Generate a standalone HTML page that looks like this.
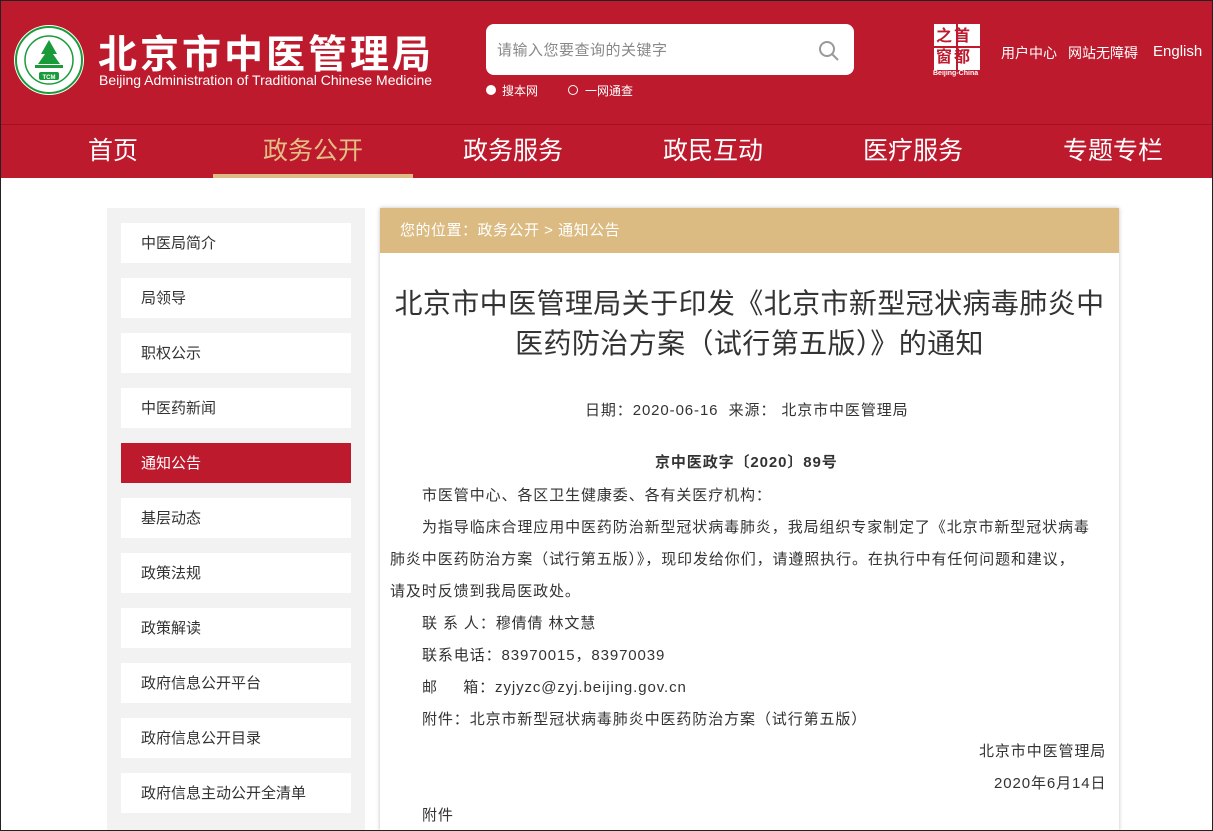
<!DOCTYPE html>
<html><head><meta charset="utf-8"><style>
*{margin:0;padding:0;box-sizing:border-box}
html,body{width:1213px;height:831px;overflow:hidden}
body{position:relative;background:#fff;font-family:"Liberation Sans","Noto Sans CJK SC",sans-serif;color:#333}
.frame{position:absolute;left:0;top:0;width:1213px;height:831px;border:1px solid #222;z-index:10;pointer-events:none}
.hd{position:absolute;left:0;top:0;width:1213px;height:124px;background:#bd1a2d}
.nav{position:absolute;left:0;top:124px;width:1213px;height:54px;background:#bd1a2d;border-top:1px solid #a3111f}
.nav div{position:absolute;top:0;width:200px;height:53px;text-align:center;line-height:52px;font-size:25px;color:#fff}
.nav .on{color:#e3bf86;border-bottom:4px solid #dcbc84}
.abs{position:absolute;white-space:nowrap}
.side{position:absolute;left:107px;top:208px;width:258px;height:623px;background:#f2f2f2}
.side div{position:absolute;left:14px;width:230px;height:40px;background:#fff;font-size:15px;line-height:42px;padding-left:20px;color:#333}
.side .act{background:#bd1a2d;color:#fff}
.main{position:absolute;left:380px;top:208px;width:739px;height:623px;background:#fff;box-shadow:0 0 4px rgba(0,0,0,.25)}
.bc{height:45px;background:#dbbb82;color:#fff;font-size:15px;line-height:46px;padding-left:20px;letter-spacing:.5px}
.t{font-size:15px;position:absolute;white-space:nowrap;color:#333;letter-spacing:.9px}
</style></head><body>
<div class="frame"></div>
<div class="hd">
 <svg class="abs" style="left:13px;top:24px" width="72" height="72" viewBox="0 0 72 72">
  <circle cx="36" cy="36" r="35" fill="#fff"/><circle cx="36" cy="36" r="33" fill="none" stroke="#1a9b3a" stroke-width="2"/>
  <circle cx="36" cy="36" r="24" fill="#fff" stroke="#1a9b3a" stroke-width="1.5"/>
  <path d="M36 16 L44 30 L40 30 L47 40 L25 40 L32 30 L28 30Z" fill="#1a9b3a"/>
  <rect x="22" y="41" width="28" height="3" fill="#1a9b3a"/>
  <rect x="26" y="48" width="20" height="8" rx="2" fill="#1a9b3a"/>
  <text x="36" y="55" font-size="6" fill="#fff" text-anchor="middle" font-weight="bold" font-family="Liberation Sans">TCM</text>
 </svg>
 <div class="abs" style="left:98px;top:24px;font-size:39px;font-weight:bold;color:#fff;letter-spacing:3px">北京市中医管理局</div>
 <div class="abs" style="left:99px;top:72px;font-size:14px;color:#fff">Beijing Administration of Traditional Chinese Medicine</div>
 <div class="abs" style="left:486px;top:24px;width:368px;height:51px;background:#fff;border-radius:8px"></div>
 <div class="abs" style="left:497px;top:39px;font-size:15px;color:#888;letter-spacing:.5px">请输入您要查询的关键字</div>
 <svg class="abs" style="left:818px;top:40px" width="22" height="22" viewBox="0 0 22 22"><circle cx="9" cy="9" r="7" fill="none" stroke="#999" stroke-width="2"/><path d="M14 14l6 6" stroke="#999" stroke-width="2"/></svg>
 <div class="abs" style="left:486px;top:85px;width:10px;height:10px;border-radius:50%;background:#fff"></div>
 <div class="abs" style="left:502px;top:82px;font-size:12px;color:#fff">搜本网</div>
 <div class="abs" style="left:568px;top:85px;width:10px;height:10px;border-radius:50%;border:1px solid #fff"></div>
 <div class="abs" style="left:585px;top:82px;font-size:12px;color:#fff">一网通查</div>
 <div class="abs" style="left:934px;top:24px;width:46px;height:46px;background:#fff"></div>
 <div class="abs" style="left:936px;top:26px;width:42px;font-size:16px;line-height:21px;color:#bd1a2d;font-weight:bold;white-space:normal;letter-spacing:2px">之首<br>窗都</div>
 <div class="abs" style="left:956px;top:24px;width:2px;height:46px;background:#bd1a2d"></div>
 <div class="abs" style="left:934px;top:46px;width:46px;height:2px;background:#bd1a2d"></div>
 <div class="abs" style="left:933px;top:70px;font-size:7px;color:#fff;font-weight:bold">Beijing-China</div>
 <div class="abs" style="left:1001px;top:43px;font-size:14px;color:#fff">用户中心</div>
 <div class="abs" style="left:1068px;top:43px;font-size:14px;color:#fff">网站无障碍</div>
 <div class="abs" style="left:1153px;top:43px;font-size:15px;color:#fff">English</div>
</div>
<div class="nav">
 <div style="left:13px">首页</div><div class="on" style="left:213px">政务公开</div><div style="left:413px">政务服务</div><div style="left:613px">政民互动</div><div style="left:813px">医疗服务</div><div style="left:1013px">专题专栏</div>
</div>
<div class="side">
 <div style="top:15px">中医局简介</div><div style="top:70px">局领导</div><div style="top:125px">职权公示</div><div style="top:180px">中医药新闻</div><div class="act" style="top:235px">通知公告</div><div style="top:290px">基层动态</div><div style="top:345px">政策法规</div><div style="top:400px">政策解读</div><div style="top:455px">政府信息公开平台</div><div style="top:510px">政府信息公开目录</div><div style="top:565px">政府信息主动公开全清单</div>
</div>
<div class="main"><div class="bc">您的位置：政务公开 &gt; 通知公告</div></div>
<div class="abs" style="left:380px;top:284px;width:739px;text-align:center;font-size:28px;line-height:40px;color:#333;letter-spacing:0.4px">北京市中医管理局关于印发《北京市新型冠状病毒肺炎中<br>医药防治方案（试行第五版）》的通知</div>
<div class="t" style="left:585px;top:399px">日期：2020-06-16&nbsp; 来源： 北京市中医管理局</div>
<div class="t" style="left:655px;top:451px;font-weight:bold">京中医政字〔2020〕89号</div>
<div class="t" style="left:422px;top:484px">市医管中心、各区卫生健康委、各有关医疗机构：</div>
<div class="t" style="left:422px;top:516px">为指导临床合理应用中医药防治新型冠状病毒肺炎，我局组织专家制定了《北京市新型冠状病毒</div>
<div class="t" style="left:390px;top:548px">肺炎中医药防治方案（试行第五版）》，现印发给你们，请遵照执行。在执行中有任何问题和建议，</div>
<div class="t" style="left:390px;top:580px">请及时反馈到我局医政处。</div>
<div class="t" style="left:422px;top:612px">联 系 人：穆倩倩 林文慧</div>
<div class="t" style="left:422px;top:644px">联系电话：83970015，83970039</div>
<div class="t" style="left:422px;top:676px">邮&nbsp;&nbsp;&nbsp;&nbsp; 箱：zyjyzc@zyj.beijing.gov.cn</div>
<div class="t" style="left:422px;top:708px">附件：北京市新型冠状病毒肺炎中医药防治方案（试行第五版）</div>
<div class="t" style="left:979px;top:740px">北京市中医管理局</div>
<div class="t" style="left:994px;top:772px">2020年6月14日</div>
<div class="t" style="left:422px;top:804px">附件</div>
</body></html>
